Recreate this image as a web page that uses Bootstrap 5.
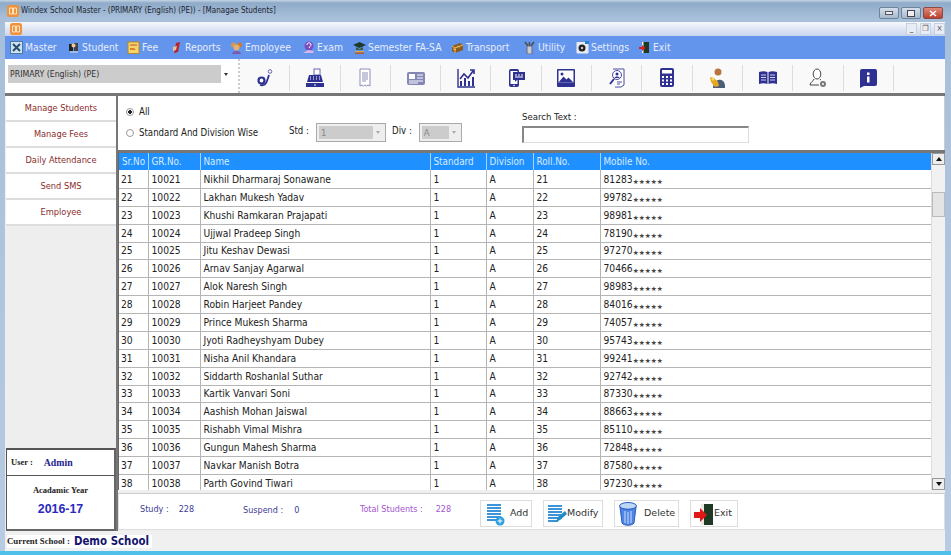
<!DOCTYPE html>
<html lang="en">
<head>
<meta charset="utf-8">
<title>Windex School Master</title>
<link href="https://cdn.jsdelivr.net/npm/bootstrap@5.3.0/dist/css/bootstrap.min.css" rel="stylesheet">
<style>
html,body{height:555px;overflow:hidden}
body{font-family:"DejaVu Sans",sans-serif;font-stretch:condensed;font-size:10.2px;color:#222;background:#a9c0d8;line-height:1.2}
.win{width:951px;height:555px;background:linear-gradient(#c4d4e4 0,#8fabc9 3px,#a8bfda 18px,#b7cbe2 100%);border-bottom:4px solid #4ec0ea}
.ttl{height:22px;padding-left:7px;gap:2px;font-size:8px;color:#1c2530}
.appico{width:12px;height:12px;flex:none}
.capbtns{margin-left:auto;margin-right:8px;gap:2px;margin-top:4px}
.capb{width:20px;height:12px;border:1px solid #6f8298;border-radius:2px;background:linear-gradient(#d4dfea,#a7b9cd);display:flex;align-items:center;justify-content:center}
.capb.cl{background:linear-gradient(#e08a78,#b9402e);border-color:#8e4a40}
.client{margin:0 6px 0 5px;height:529px;background:#efefef}
.mdi{height:14px;background:linear-gradient(#f6f8fc,#c8d5ee);padding-left:5px}
.mdib{width:11px;height:12px;border:1px solid #c8d0de;background:#e7ecf5;color:#555;font-size:8px;line-height:10px;text-align:center;margin-left:3px}
.menu{height:23px;background:#6495ed;padding:0 0 0 5px;flex-wrap:nowrap;justify-content:flex-start}
.mitem{color:#e6edfb;font-size:10.3px;gap:2px;display:flex;align-items:center;padding:0;font-stretch:condensed;flex:none;text-decoration:none}
.mitem svg{width:13px;height:13px;flex:none}
.mitem:nth-child(1){width:57px}.mitem:nth-child(2){width:60px}.mitem:nth-child(3){width:43px}.mitem:nth-child(4){width:60px}
.mitem:nth-child(5){width:72px}.mitem:nth-child(6){width:51px}.mitem:nth-child(7){width:98px}.mitem:nth-child(8){width:72px}
.mitem:nth-child(9){width:53px}.mitem:nth-child(10){width:62px}
.tools{height:34px;background:#f9f9f9}
.combozone{width:235px;background:#fff;padding:6px 0 0 3px;flex:none;border-right:2px dotted #ccc}
.combo{width:224px;height:18px;background:linear-gradient(90deg,#ccc 0,#ccc 95%,#fff 95%);font-size:8.7px;padding-left:2px;display:flex;align-items:center;color:#333}
.caret{margin-left:auto;margin-right:4px;width:0;height:0;border:2px solid transparent;border-top:3px solid #333;margin-top:3px}
.tb{width:50.3px;height:26px;margin-top:6px;border-right:1px solid #ddd;display:flex;align-items:center;justify-content:center;flex:none;padding:0;background:none;border-top:0;border-left:0;border-bottom:0;border-radius:0}
.tb svg{width:18px;height:20px}
.rule{height:3px;background:#777}
.work{height:435px}
.side{width:110px;flex:none;background:#eee;margin-left:1px}
.list-group{--bs-list-group-border-radius:0}
.list-group .sideitem{height:26px;background:#fff;color:#8a2c2c;border:0;border-bottom:2px solid #ddd;border-radius:0;padding:0;display:flex;align-items:center;justify-content:center;font-size:9.2px}
.sidefill{flex:1}
.userbox{height:28px;border:1px solid #555;border-right:2px solid #666;border-top-width:2px;background:#fff;font-family:"Liberation Serif",serif;font-weight:bold;font-size:8.5px;padding-left:4px;gap:11px;font-stretch:normal}
.userbox b{color:#24248c;font-size:9.8px}
.yearbox{height:55px;border:1px solid #555;border-right:2px solid #666;border-bottom:2px solid #666;border-top:0;background:#fff;text-align:center}
.yrlab{font-family:"Liberation Serif",serif;font-weight:bold;font-size:8.5px;margin-top:9px;font-stretch:normal}
.yrval{font-family:"Liberation Sans",sans-serif;font-weight:bold;font-size:12.4px;color:#2a2ac0;margin-top:7px;font-stretch:normal}
.mainp{width:829px;flex:none;border-left:2px solid #777}
.filt{height:54px;background:#fff;border-right:1px solid #ccc}
.fcol{width:404px;flex:none;padding:6px 0 0 8px;font-size:9.6px}
.frow{display:flex;align-items:center;height:20px}
.frow + .frow{height:21px}
.rad{width:8px;height:8px;border-radius:50%;border:1px solid #999;background:#fff;margin:0 5px 0 0;flex:none;appearance:none;display:block}
.rad:checked{background:radial-gradient(#222 0 1.6px,#fff 2px)}
.lab2{width:150px}
.fld{margin-right:7px;margin-top:-3px}
.sel{width:70px;height:19px;border:1px solid #aaa;background:#eee;padding:2px;display:flex;align-items:center;color:#888;font-size:9.5px;margin-right:6px}
.sel.sm{width:43px}
.sel span:first-child{background:#ccc;flex:1;height:100%;padding-left:2px;display:flex;align-items:center}
.sel i{width:0;height:0;border:2px solid transparent;border-top:3px solid #aaa;margin:2px 3px 0 3px}
.srch{padding:15px 0 0 0;font-size:9.5px}
.srchbox{width:227px;height:17px;border:1px solid #ddd;border-top:2px solid #888;border-left:2px solid #888;background:#fff;margin-top:4px;display:block;padding:0;border-radius:0}
.gridw{height:340px;border-top:3px solid #777;border-left:1px solid #666;background:#fff;overflow:hidden}
.gtab{width:812px;flex:none;overflow:hidden;height:337px}
.gtab .table{table-layout:fixed;margin:0;width:812px;border-collapse:collapse;--bs-table-bg:#fff;font-size:10.2px;color:#222}
.gtab th{height:17px;background:#1e90ff;color:#d8ebff;font-weight:normal;padding:0 3px;border:0;border-right:1px solid #a8d4ff;vertical-align:middle;font-size:9.8px}
.gtab td{height:18px;padding:2px 3px 0;border:0;border-right:1px solid #b5b5b5;border-bottom:1px solid #b5b5b5;vertical-align:middle;white-space:nowrap;background:#fff}
.gtab tbody tr:nth-child(5) td,.gtab tbody tr:nth-child(13) td{height:17px}
.gtab td:last-child,.gtab th:last-child{border-right:0}
.gtab td:first-child{padding-left:2px}
.cw1{width:29px}.cw2{width:52px}.cw3{width:230px}.cw4{width:56px}.cw5{width:47px}.cw6{width:67px}
.st{font-size:6.7px;color:#444;font-stretch:normal;position:relative;top:1px}
.sbar{width:14px;flex:none;background:#f1f1f1;border-left:1px solid #ddd}
.sbtn{height:12px;background:#eee;border:1px solid #999;display:flex;align-items:center;justify-content:center}
.sup{width:0;height:0;border:3px solid transparent;border-bottom:4px solid #111;margin-top:-3px}
.sdn{width:0;height:0;border:3px solid transparent;border-top:4px solid #111;margin-top:3px}
.sthumb{height:25px;background:#e4e4e4;border:1px solid #bbb;margin-top:27px}
.sgap{flex:1}
.foot{height:37px;margin-top:3px;background:#fff;border:1px solid #ddd;border-top:1px solid #ccc;padding-left:21px;font-size:9px}
.fs{color:#3c3c96;display:flex;align-items:center}
.fs1{width:103px;gap:10px;margin-top:-5px}
.fs2{width:117px;gap:11px;margin-top:-3px}
.fs3{width:120px;gap:13px;color:#a455d3;margin-top:-4px}
.fb{height:27px;border:1px solid #ddd;border-radius:0;background:#fff;color:#333;font-size:9.5px;padding:0 3px;display:flex;align-items:center;margin-top:4px;margin-right:11px}
.fb svg{width:20px;height:24px;flex:none}
.fa{width:52px;gap:5px;padding-left:4px}.fm{width:60px;gap:0}.fd{width:65px;gap:6px}.fe{width:48px;gap:0;padding-left:3px}
.stat{height:20px;background:#f0f0f0;padding:4px 0 0 2px;font-family:"Liberation Serif",serif;font-weight:bold;font-size:8.8px;font-stretch:normal}
.stat span{height:13px;background:#fff;display:flex;align-items:center;padding-right:3px;gap:4px}
.stat b{font-family:"DejaVu Sans",sans-serif;font-size:11.4px;color:#14146e;font-stretch:condensed}
</style>
</head>
<body>
<div class="win d-flex flex-column">
  <div class="ttl d-flex align-items-center">
    <svg class="appico" viewBox="0 0 12 12"><rect width="12" height="12" rx="2.5" fill="#f0923a"/><path d="M2.500 3h3v6h-3zM6.500 3h3v6h-3z" fill="none" stroke="#fde6c8"/></svg>
    <span>Windex School Master - (PRIMARY (English) (PE)) - [Managae Students]</span>
    <div class="capbtns d-flex">
      <div class="capb"><svg width="8" height="4"><rect x=".5" y=".5" width="7" height="3" fill="#eee" stroke="#556"/></svg></div>
      <div class="capb"><svg width="8" height="7"><rect x=".5" y=".5" width="7" height="6" fill="#eee" stroke="#445"/></svg></div>
      <div class="capb cl"><svg width="8" height="7"><path d="M1 1l6 5M7 1L1 6" stroke="#fff" stroke-width="1.6"/></svg></div>
    </div>
  </div>
  <div class="client">
    <div class="mdi d-flex align-items-center">
      <svg class="appico" viewBox="0 0 12 12"><rect width="12" height="12" rx="2.5" fill="#f0923a"/><path d="M2.500 3h3v6h-3zM6.500 3h3v6h-3z" fill="none" stroke="#fde6c8"/></svg>
      <div class="mdib ms-auto">_</div><div class="mdib">❐</div><div class="mdib">×</div>
    </div>
    <nav class="navbar menu">
      <a class="mitem" href="#"><svg viewBox="0 0 13 13"><rect x=".5" y=".5" width="12" height="12" fill="#cfe0f2" stroke="#4a7a9c"/><path d="M3 3l7 7M10 3l-7 7" stroke="#24506e" stroke-width="2"/></svg>Master</a>
      <a class="mitem" href="#"><svg viewBox="0 0 13 13"><rect x="2" y="3" width="4" height="7" fill="#222"/><rect x="7" y="2" width="4" height="8" fill="#444"/><circle cx="6.500" cy="4.500" r="2" fill="#e8c9a0"/><path d="M3 11h8" stroke="#ddd"/></svg>Student</a>
      <a class="mitem" href="#"><svg viewBox="0 0 13 13"><rect x="1" y="1" width="11" height="11.500" fill="#f4d56a" stroke="#b9862a"/><path d="M3 4h7" stroke="#c0502a"/><path d="M3 7h4l2 2H3z" fill="#e0802a"/></svg>Fee</a>
      <a class="mitem" href="#"><svg viewBox="0 0 13 13"><path d="M4 12l2-10 4-1-2 10z" fill="#b8242a"/><path d="M3 6l4-1-1 4-3 1z" fill="#e6c2a0"/></svg>Reports</a>
      <a class="mitem" href="#"><svg viewBox="0 0 13 13"><circle cx="3.500" cy="4" r="2.500" fill="#d09a50"/><circle cx="9.500" cy="4" r="2.500" fill="#c87a3a"/><circle cx="6.500" cy="6.500" r="3" fill="#e6b070"/><path d="M2 13c0-4 9-4 9 0z" fill="#7a5ab0"/></svg>Employee</a>
      <a class="mitem" href="#"><svg viewBox="0 0 13 13"><circle cx="7" cy="5" r="4.500" fill="#7c4cc0"/><path d="M5 4a2 2 0 1 1 3 1.500L7 7" stroke="#fff" fill="none"/><path d="M1 12l5-3 6 1-1 2z" fill="#d8b8e8"/></svg>Exam</a>
      <a class="mitem" href="#"><svg viewBox="0 0 13 13"><path d="M0 4l6.500-3L13 4 6.500 7z" fill="#1d3a2c"/><path d="M3 6v3h7V6L6.500 8z" fill="#3a5a3c"/><rect x="2" y="10" width="9" height="1.500" fill="#d8a040"/><rect x="2" y="11.500" width="9" height="1.500" fill="#b05a30"/></svg>Semester FA-SA</a>
      <a class="mitem" href="#"><svg viewBox="0 0 13 13"><path d="M1 5l8-3 3 2v5l-8 3-3-2z" fill="#8a5a1e"/><path d="M1 5l3 2 8-3M4 7v5M2 8l3 1M6 5l3 1" stroke="#e8c060" fill="none"/></svg>Transport</a>
      <a class="mitem" href="#"><svg viewBox="0 0 13 13"><path d="M2 1l3 4M11 1L8 5M6.500 1v4" stroke="#4a4a4a" stroke-width="1.500"/><rect x="4" y="5" width="5" height="8" rx="1" fill="#c8ccd2" stroke="#667"/></svg>Utility</a>
      <a class="mitem" href="#"><svg viewBox="0 0 13 13"><rect x=".5" y="1" width="12" height="11.500" rx="1" fill="#e8ecf2"/><circle cx="6" cy="7" r="3.500" fill="#222"/><circle cx="6" cy="7" r="1.200" fill="#ccc"/><rect x="9" y="0" width="4" height="3" fill="#2a80d0"/></svg>Settings</a>
      <a class="mitem" href="#"><svg viewBox="0 0 13 13"><rect x="5" y="1" width="6" height="11" fill="#1e3a24"/><rect x="4" y="1" width="1.500" height="11" fill="#eee"/><path d="M1 6h3V4l3.500 3L4 10V8H1z" fill="#e02020"/></svg>Exit</a>
    </nav>
    <div class="tools d-flex">
      <div class="combozone"><div class="combo">PRIMARY (English) (PE)<span class="caret"></span></div></div>
      <button class="btn tb" type="button" aria-label="Enquiry"><svg viewBox="0 0 18 20"><circle cx="5.500" cy="12.500" r="3" fill="none" stroke="#2f3192" stroke-width="2.200"/><path d="M4 17c4 1 6-1 7-4l2-6" fill="none" stroke="#2f3192" stroke-width="1.800"/><circle cx="14" cy="3.500" r="1.800" fill="none" stroke="#6668ac"/></svg></button>
      <button class="btn tb" type="button" aria-label="Cash"><svg viewBox="0 0 18 20"><rect x="8" y="1" width="6" height="6" fill="#fff" stroke="#6668ac"/><path d="M3 7h12l2 7H1z" fill="#2f3192"/><path d="M4 9h1M7 9h1M10 9h1M13 9h1M4 11h1M7 11h1M10 11h1M13 11h1" stroke="#fff"/><rect y="15" width="18" height="4" fill="#2f3192"/><rect x="8" y="16.500" width="2" height="1" fill="#fff"/></svg></button>
      <button class="btn tb" type="button" aria-label="Receipt"><svg viewBox="0 0 18 20"><path d="M4 1h10v17l-2-1-1.500 1-1.500-1-1.500 1L6 17l-2 1z" fill="#fff" stroke="#8d8fb8"/><path d="M6 5h6M6 7h6M6 9h6M6 11h6M6 13h4" stroke="#8d8fb8"/></svg></button>
      <button class="btn tb" type="button" aria-label="Identity card"><svg viewBox="0 0 18 20"><rect y="4" width="18" height="13" rx="2" fill="#8486b6"/><rect x="2" y="6" width="6" height="5" fill="#fff"/><path d="M10 7h6M10 10h6M2 13h14M2 15h9" stroke="#fff"/></svg></button>
      <button class="btn tb" type="button" aria-label="Chart"><svg viewBox="0 0 18 20"><path d="M1 1v18h17" fill="none" stroke="#2f3192" stroke-width="1.400"/><path d="M3 18v-5h2v5zM7 18v-8h2v8zM11 18v-5h2v5zM15 18V9h2v9z" fill="#2f3192"/><path d="M3 11l4-5 4 4 5-7M13 2h4v4" fill="none" stroke="#2f3192" stroke-width="1.600"/></svg></button>
      <button class="btn tb" type="button" aria-label="SMS"><svg viewBox="0 0 18 20"><rect x="2" y="1" width="10" height="18" rx="2" fill="#2f3192"/><rect x="3.500" y="3" width="7" height="13" fill="#fff"/><circle cx="7" cy="17.500" r=".8" fill="#fff"/><path d="M6 4h12v8h-8l-2 2v-2H6z" fill="#2f3192"/><path d="M8 7h2M11 7h2M14 7h2M8 9h8" stroke="#fff"/></svg></button>
      <button class="btn tb" type="button" aria-label="Picture"><svg viewBox="0 0 18 20"><rect y="1" width="18" height="18" rx="1" fill="#2f3192"/><rect x="1.500" y="2.500" width="15" height="12" fill="#fff"/><circle cx="5" cy="6" r="1.500" fill="#2f3192"/><path d="M1.500 14.500l5-6 3 3 2-2 5 5z" fill="#2f3192"/></svg></button>
      <button class="btn tb" type="button" aria-label="Search contact"><svg viewBox="0 0 18 20"><path d="M5 1h11v16l-3 2H7" fill="#fff" stroke="#4a4c9c"/><circle cx="9" cy="7" r="4.500" fill="none" stroke="#4a4c9c"/><circle cx="9" cy="6" r="1.500" fill="#2f3192"/><path d="M6.500 10c0-2 5-2 5 0z" fill="#2f3192"/><path d="M6 11l-4 5" stroke="#2f3192" stroke-width="2"/><path d="M9 14h5M9 16h3" stroke="#4a4c9c"/></svg></button>
      <button class="btn tb" type="button" aria-label="Calculator"><svg viewBox="0 0 18 20"><rect x="2" y="0" width="14" height="19" rx="2" fill="#2f3192"/><rect x="4" y="2" width="10" height="3.500" fill="#fff"/><path d="M4 8h2v2H4zM8 8h2v2H8zM12 8h2v2h-2zM4 11.500h2v2H4zM8 11.500h2v2H8zM12 11.500h2v2h-2zM4 15h2v2H4zM8 15h2v2H8zM12 15h2v2h-2z" fill="#fff"/></svg></button>
      <button class="btn tb" type="button" aria-label="Staff"><svg viewBox="0 0 18 20"><circle cx="10" cy="4" r="3.500" fill="#b8763c"/><path d="M5 20c0-10 11-11 12-3v3z" fill="#4c5f78"/><path d="M2 9l4 1 4 4 1 4-4 1-4-5z" fill="#e8a81c"/><circle cx="5" cy="11" r="1.500" fill="#f8d860"/></svg></button>
      <button class="btn tb" type="button" aria-label="Book"><svg viewBox="0 0 18 20"><path d="M0 4c3-1 6-1 8.500 0v12C6 15 3 15 0 16zM9.500 4C12 3 15 3 18 4v12c-3-1-6-1-8.500 0z" fill="#2f3192"/><path d="M2 7h5M2 9.500h5M2 12h5M11 7h5M11 9.500h5M11 12h5" stroke="#cfd0ea"/></svg></button>
      <button class="btn tb" type="button" aria-label="User settings"><svg viewBox="0 0 18 20"><ellipse cx="8" cy="6" rx="3.800" ry="5" fill="#fff" stroke="#444"/><path d="M5 11c0 2-4 3-4 6h9" fill="none" stroke="#444"/><path d="M11 11c0 .5.500 1 1 1" fill="none" stroke="#444"/><circle cx="14" cy="16" r="3" fill="#777"/><circle cx="14" cy="16" r="1" fill="#fff"/></svg></button>
      <button class="btn tb" type="button" aria-label="Information"><svg viewBox="0 0 18 20"><path d="M3 1h13a2 2 0 0 1 2 2v13a2 2 0 0 1-2 2H5l-4 2V3a2 2 0 0 1 2-2z" fill="#2f3192"/><rect x="8" y="4.500" width="2.500" height="2.500" fill="#fff"/><rect x="8" y="8.500" width="2.500" height="6" fill="#fff"/></svg></button>
    </div>
    <div class="rule"></div>
    <div class="work d-flex">
      <div class="side d-flex flex-column">
        <div class="list-group">
          <a class="list-group-item sideitem" href="#">Manage Students</a>
          <a class="list-group-item sideitem" href="#">Manage Fees</a>
          <a class="list-group-item sideitem" href="#">Daily Attendance</a>
          <a class="list-group-item sideitem" href="#">Send SMS</a>
          <a class="list-group-item sideitem" href="#">Employee</a>
        </div>
        <div class="sidefill"></div>
        <div class="userbox d-flex align-items-center">User : <b>Admin</b></div>
        <div class="yearbox"><div class="yrlab">Acadamic Year</div><div class="yrval">2016-17</div></div>
      </div>
      <div class="mainp">
        <div class="filt d-flex">
          <div class="fcol">
            <div class="frow"><input class="rad" type="radio" name="f" checked aria-label="All"><span>All</span></div>
            <div class="frow"><input class="rad" type="radio" name="f" aria-label="Standard And Division Wise"><span class="lab2">Standard And Division Wise</span>
              <span class="fld">Std :</span><div class="sel"><span>1</span><i></i></div>
              <span class="fld">Div :</span><div class="sel sm"><span>A</span><i></i></div>
            </div>
          </div>
          <div class="srch"><div>Search Text :</div><input class="srchbox" type="text" aria-label="Search Text"></div>
        </div>
        <div class="gridw d-flex">
          <div class="gtab">
            <table class="table">
              <colgroup><col class="cw1"><col class="cw2"><col class="cw3"><col class="cw4"><col class="cw5"><col class="cw6"><col></colgroup>
              <thead><tr><th>Sr.No</th><th>GR.No.</th><th>Name</th><th>Standard</th><th>Division</th><th>Roll.No.</th><th>Mobile No.</th></tr></thead>
              <tbody>
<tr><td>21</td><td>10021</td><td>Nikhil Dharmaraj Sonawane</td><td>1</td><td>A</td><td>21</td><td>81283<span class="st">★★★★★</span></td></tr>
<tr><td>22</td><td>10022</td><td>Lakhan Mukesh Yadav</td><td>1</td><td>A</td><td>22</td><td>99782<span class="st">★★★★★</span></td></tr>
<tr><td>23</td><td>10023</td><td>Khushi Ramkaran Prajapati</td><td>1</td><td>A</td><td>23</td><td>98981<span class="st">★★★★★</span></td></tr>
<tr><td>24</td><td>10024</td><td>Ujjwal Pradeep Singh</td><td>1</td><td>A</td><td>24</td><td>78190<span class="st">★★★★★</span></td></tr>
<tr><td>25</td><td>10025</td><td>Jitu Keshav Dewasi</td><td>1</td><td>A</td><td>25</td><td>97270<span class="st">★★★★★</span></td></tr>
<tr><td>26</td><td>10026</td><td>Arnav Sanjay Agarwal</td><td>1</td><td>A</td><td>26</td><td>70466<span class="st">★★★★★</span></td></tr>
<tr><td>27</td><td>10027</td><td>Alok Naresh Singh</td><td>1</td><td>A</td><td>27</td><td>98983<span class="st">★★★★★</span></td></tr>
<tr><td>28</td><td>10028</td><td>Robin Harjeet Pandey</td><td>1</td><td>A</td><td>28</td><td>84016<span class="st">★★★★★</span></td></tr>
<tr><td>29</td><td>10029</td><td>Prince Mukesh Sharma</td><td>1</td><td>A</td><td>29</td><td>74057<span class="st">★★★★★</span></td></tr>
<tr><td>30</td><td>10030</td><td>Jyoti Radheyshyam Dubey</td><td>1</td><td>A</td><td>30</td><td>95743<span class="st">★★★★★</span></td></tr>
<tr><td>31</td><td>10031</td><td>Nisha Anil Khandara</td><td>1</td><td>A</td><td>31</td><td>99241<span class="st">★★★★★</span></td></tr>
<tr><td>32</td><td>10032</td><td>Siddarth Roshanlal Suthar</td><td>1</td><td>A</td><td>32</td><td>92742<span class="st">★★★★★</span></td></tr>
<tr><td>33</td><td>10033</td><td>Kartik Vanvari Soni</td><td>1</td><td>A</td><td>33</td><td>87330<span class="st">★★★★★</span></td></tr>
<tr><td>34</td><td>10034</td><td>Aashish Mohan Jaiswal</td><td>1</td><td>A</td><td>34</td><td>88663<span class="st">★★★★★</span></td></tr>
<tr><td>35</td><td>10035</td><td>Rishabh Vimal Mishra</td><td>1</td><td>A</td><td>35</td><td>85110<span class="st">★★★★★</span></td></tr>
<tr><td>36</td><td>10036</td><td>Gungun Mahesh Sharma</td><td>1</td><td>A</td><td>36</td><td>72848<span class="st">★★★★★</span></td></tr>
<tr><td>37</td><td>10037</td><td>Navkar Manish Botra</td><td>1</td><td>A</td><td>37</td><td>87580<span class="st">★★★★★</span></td></tr>
<tr><td>38</td><td>10038</td><td>Parth Govind Tiwari</td><td>1</td><td>A</td><td>38</td><td>97230<span class="st">★★★★★</span></td></tr>
              </tbody>
            </table>
          </div>
          <div class="sbar d-flex flex-column">
            <div class="sbtn"><span class="sup"></span></div>
            <div class="sthumb"></div>
            <div class="sgap"></div>
            <div class="sbtn"><span class="sdn"></span></div>
          </div>
        </div>
        <div class="foot d-flex align-items-center">
          <div class="fs fs1"><span>Study :</span><span>228</span></div>
          <div class="fs fs2"><span>Suspend :</span><span>0</span></div>
          <div class="fs fs3"><span>Total Students :</span><span>228</span></div>
          <button class="btn fb fa" type="button"><svg viewBox="0 0 20 24"><path d="M2 3h14M2 6h14M2 9h14M2 12h14M2 15h14M2 18h10" stroke="#3d94d8" stroke-width="2"/><circle cx="15" cy="19" r="4.500" fill="#2d9fe0"/><path d="M15 16.500v5M12.500 19h5" stroke="#fff"/></svg>Add</button>
          <button class="btn fb fm" type="button"><svg viewBox="0 0 20 24"><path d="M1 4h14M1 7h14M1 10h14M1 13h14M1 16h14M1 19h10" stroke="#3d94d8" stroke-width="2"/><path d="M9 20l2-5 7-6 2 3-7 6z" fill="#1f8cc8"/></svg>Modify</button>
          <button class="btn fb fd" type="button"><svg viewBox="0 0 20 24"><ellipse cx="10" cy="4" rx="8.500" ry="3.500" fill="#bcd6f5" stroke="#2a5cc0"/><path d="M2 5l2 16c2 3 10 3 12 0l2-16c-3 3-13 3-16 0z" fill="#4f86e6" stroke="#2a5cc0"/><path d="M7 9v12M10 10v12M13 9v12" stroke="#cfe0fa"/></svg>Delete</button>
          <button class="btn fb fe" type="button"><svg viewBox="0 0 20 24"><rect x="9" y="2" width="10" height="21" fill="#1e3a24"/><rect x="7" y="2" width="3" height="21" fill="#e8e8e0"/><path d="M0 10h6V6l7 7-7 7v-4H0z" fill="#e01818"/></svg>Exit</button>
        </div>
      </div>
    </div>
    <div class="stat d-flex"><span>Current School : <b>Demo School</b></span></div>
  </div>
</div>
<script src="https://cdn.jsdelivr.net/npm/bootstrap@5.3.0/dist/js/bootstrap.bundle.min.js"></script>
</body>
</html>
